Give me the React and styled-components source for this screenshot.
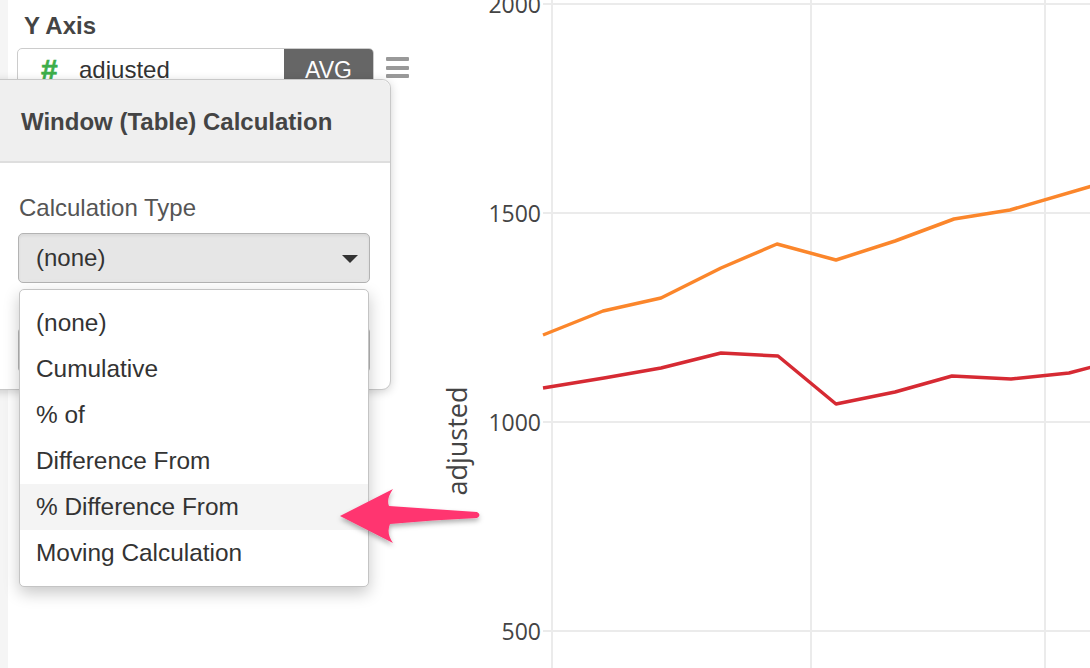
import React from "react";
import styled, { createGlobalStyle } from "styled-components";

const GlobalStyle = createGlobalStyle`
  html, body {
    margin: 0;
    padding: 0;
    background: #fff;
  }
  body {
    font-family: "Liberation Sans", Arial, sans-serif;
  }
`;

const options = [
  "(none)",
  "Cumulative",
  "% of",
  "Difference From",
  "% Difference From",
  "Moving Calculation",
];

const orange = [
  [543, 335], [603, 311], [661, 298], [721, 268], [777, 244], [836, 260],
  [895, 241], [954, 219], [1010, 210], [1092, 186],
];

const red = [
  [543, 388], [604, 378], [661, 368], [721, 353], [778, 356], [836, 404],
  [895, 392], [952, 376], [1011, 379], [1069, 373], [1092, 367],
];

const yTicks = [
  { label: "2000", y: 4 },
  { label: "1500", y: 213 },
  { label: "1000", y: 422 },
  { label: "500", y: 631 },
];

const toPoints = (pts) => pts.map((p) => p.join(",")).join(" ");

const App = () => {
  return (
    <Page>
      <GlobalStyle />
      <Sidebar>
        <SectionTitle>Y Axis</SectionTitle>
        <FieldRow>
          <FieldBox>
            <TypeMark>#</TypeMark>
            <FieldName>adjusted</FieldName>
            <AggButton>AVG</AggButton>
          </FieldBox>
          <MenuIcon>
            <span />
            <span />
            <span />
          </MenuIcon>
        </FieldRow>
      </Sidebar>

      <ChartArea>
        <svg width="660" height="668" viewBox="430 0 660 668">
          {yTicks.map((t) => (
            <line key={t.label} x1="543" x2="1090" y1={t.y} y2={t.y} stroke="#ebebeb" strokeWidth="2" />
          ))}
          {[552, 811, 1045].map((x) => (
            <line key={x} x1={x} x2={x} y1="0" y2="668" stroke="#ebebeb" strokeWidth="2" />
          ))}
          {yTicks.map((t) => (
            <text
              key={t.label}
              x="541"
              y={t.y}
              textAnchor="end"
              dominantBaseline="central"
              fontFamily="'Open Sans', sans-serif"
              fontSize="23"
              fill="#444"
            >
              {t.label}
            </text>
          ))}
          <text
            x="0"
            y="0"
            transform="translate(467 441) rotate(-90)"
            textAnchor="middle"
            fontFamily="'Open Sans', sans-serif"
            fontSize="27"
            fill="#444"
          >
            adjusted
          </text>
          <polyline points={toPoints(orange)} fill="none" stroke="#fb862b" strokeWidth="3.5" strokeLinejoin="round" />
          <polyline points={toPoints(red)} fill="none" stroke="#d62a33" strokeWidth="3.5" strokeLinejoin="round" />
        </svg>
      </ChartArea>

      <Popover>
        <PopoverHeader>Window (Table) Calculation</PopoverHeader>
        <PopoverBody>
          <FieldLabel>Calculation Type</FieldLabel>
          <SelectWrap>
            <Select>
              (none)
              <Caret />
            </Select>
            <OptionList>
              {options.map((o) => (
                <OptionItem key={o} $active={o === "% Difference From"}>
                  {o}
                </OptionItem>
              ))}
            </OptionList>
          </SelectWrap>
          <HiddenButton />
        </PopoverBody>
      </Popover>

      <Pointer width="160" height="75" viewBox="330 480 160 75">
        <defs>
          <filter id="arrowShadow" x="-20%" y="-30%" width="140%" height="170%">
            <feDropShadow dx="0" dy="3" stdDeviation="2.5" floodColor="#000" floodOpacity="0.3" />
          </filter>
        </defs>
        <path
          d="M340 516 L393 489 Q386 499 389 506 Q432 509 477 512 Q482 515 477 518 Q432 520 390 524 Q386 533 393 543 Z"
          fill="#ff3470"
          filter="url(#arrowShadow)"
        />
      </Pointer>
    </Page>
  );
};

const Page = styled.div`
  position: relative;
  display: flex;
  width: 1090px;
  height: 668px;
  overflow: hidden;
  background: #fff;
`;

const Sidebar = styled.div`
  width: 406px;
  flex-shrink: 0;
  border-left: 8px solid #f5f5f5;
  padding: 12px 0 0 16px;
  display: flex;
  flex-direction: column;
`;

const SectionTitle = styled.div`
  font-size: 24px;
  line-height: 28px;
  font-weight: bold;
  color: #444;
`;

const FieldRow = styled.div`
  display: flex;
  align-items: flex-start;
  gap: 12px;
  margin-top: 8px;
  margin-left: -7px;
`;

const FieldBox = styled.div`
  display: flex;
  align-items: center;
  width: 357px;
  height: 44px;
  box-sizing: border-box;
  border: 1px solid #ccc;
  border-radius: 5px;
  overflow: hidden;
`;

const TypeMark = styled.span`
  font-weight: bold;
  font-size: 30px;
  color: #3dae4a;
  margin-left: 23px;
  width: 38px;
  -webkit-text-stroke: 0.6px #3dae4a;
`;

const FieldName = styled.span`
  flex: 1;
  font-size: 24px;
  color: #333;
`;

const AggButton = styled.span`
  align-self: stretch;
  width: 89px;
  display: flex;
  align-items: center;
  justify-content: center;
  background: #666;
  color: #fff;
  font-size: 23px;
`;

const MenuIcon = styled.div`
  display: flex;
  flex-direction: column;
  gap: 4.5px;
  margin-top: 9px;
  span {
    display: block;
    width: 23px;
    height: 4px;
    background: #999;
    border-radius: 1px;
  }
`;

const ChartArea = styled.div`
  flex: 1;
  svg {
    display: block;
  }
`;

const Popover = styled.div`
  position: absolute;
  top: 79px;
  left: -10px;
  width: 401px;
  height: 311px;
  box-sizing: border-box;
  border: 1px solid #c8c8c8;
  border-radius: 0 9px 9px 0;
  background: #fff;
  box-shadow: 0 2px 10px rgba(0, 0, 0, 0.18);
  display: flex;
  flex-direction: column;
`;

const PopoverHeader = styled.div`
  background: #efefef;
  border-bottom: 2px solid #dedede;
  border-radius: 0 9px 0 0;
  padding: 28px 0 25px 30px;
  font-size: 24px;
  line-height: 28px;
  font-weight: bold;
  color: #444;
`;

const PopoverBody = styled.div`
  padding: 31px 20px 0 27px;
  display: flex;
  flex-direction: column;
`;

const FieldLabel = styled.div`
  font-size: 24px;
  line-height: 28px;
  color: #555;
  margin-left: 1px;
`;

const SelectWrap = styled.div`
  position: relative;
  margin-top: 11px;
`;

const Select = styled.div`
  height: 50px;
  box-sizing: border-box;
  border: 1px solid #b3b3b3;
  border-radius: 5px;
  background: #e6e6e6;
  box-shadow: inset 0 2px 3px rgba(0, 0, 0, 0.06);
  display: flex;
  align-items: center;
  justify-content: space-between;
  padding: 0 11px 0 17px;
  font-size: 24px;
  color: #333;
`;

const Caret = styled.span`
  width: 0;
  height: 0;
  border-left: 8px solid transparent;
  border-right: 8px solid transparent;
  border-top: 8px solid #333;
  margin-top: 2px;
`;

const OptionList = styled.ul`
  position: absolute;
  top: calc(100% + 6px);
  left: 1px;
  right: 1px;
  margin: 0;
  padding: 10px 0;
  list-style: none;
  background: #fff;
  border: 1px solid #c4c4c4;
  border-radius: 5px;
  box-shadow: 0 6px 16px rgba(0, 0, 0, 0.22);
  z-index: 2;
`;

const OptionItem = styled.li`
  height: 46px;
  display: flex;
  align-items: center;
  padding-left: 16px;
  font-size: 24.4px;
  color: #333;
  background: ${(p) => (p.$active ? "#f4f4f4" : "transparent")};
`;

const HiddenButton = styled.div`
  margin-top: 44px;
  height: 46px;
  box-sizing: border-box;
  border: 1px solid #b8b8b8;
  border-radius: 5px;
  background: linear-gradient(#f8f8f8, #e8e8e8);
`;

const Pointer = styled.svg`
  position: absolute;
  left: 330px;
  top: 480px;
  overflow: visible;
  z-index: 3;
`;

export default App;
